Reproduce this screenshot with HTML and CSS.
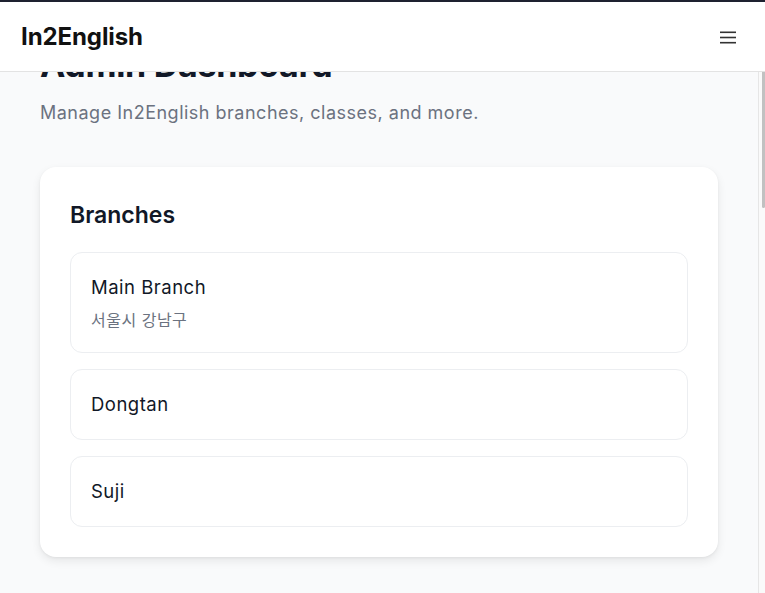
FILE: index.html
```html
<!DOCTYPE html>
<html lang="ko">
<head>
<meta charset="utf-8">
<title>In2English Admin</title>
<link rel="stylesheet" href="styles.css">
</head>
<body>
<div class="topline"></div>
<header class="header">
  <div class="brand">In2English</div>
  <button class="menu" aria-label="Menu">
    <svg width="16" height="13" viewBox="0 0 16 13"><rect x="0" y="0.5" width="16" height="1.6" fill="#333"/><rect x="0" y="5.7" width="16" height="1.6" fill="#333"/><rect x="0" y="10.9" width="16" height="1.6" fill="#333"/></svg>
  </button>
</header>
<div class="viewport">
  <main class="main">
    <h1 class="title">Admin Dashboard</h1>
    <p class="subtitle">Manage In2English branches, classes, and more.</p>
    <section class="card">
      <h2 class="card-title">Branches</h2>
      <ul class="list">
        <li class="item">
          <div class="item-name">Main Branch</div>
          <div class="item-sub">서울시 강남구</div>
        </li>
        <li class="item">
          <div class="item-name">Dongtan</div>
        </li>
        <li class="item">
          <div class="item-name">Suji</div>
        </li>
      </ul>
    </section>
  </main>
  <div class="scrollbar"><div class="thumb"></div></div>
</div>
</body>
</html>
```
FILE: styles.css
```css
* { box-sizing: border-box; }
html, body { height: 100%; }
body {
  margin: 0;
  font-family: Inter, "Noto Sans CJK KR", sans-serif;
  color: #111827;
  background: #f9fafb;
  display: flex;
  flex-direction: column;
  overflow: hidden;
}
.topline { height: 2px; background: #1e2130; flex: none; }
.header {
  flex: none;
  height: 70px;
  background: #fff;
  border-bottom: 1px solid #e3e3e3;
  display: flex;
  align-items: center;
  justify-content: space-between;
  padding: 0 29px 0 21px;
}
.brand { font-size: 24px; font-weight: 700; letter-spacing: -0.1px; color: #111; }
.menu { border: 0; background: none; padding: 0; display: flex; margin-top: 1px; }
.viewport { flex: 1; display: flex; min-height: 0; }
.main {
  flex: 1;
  overflow: hidden;
  padding: 0 40px;
  background: #f9fafb;
}
.title {
  margin: -27px 0 0;
  font-size: 34px;
  line-height: 40px;
  font-weight: 700;
  letter-spacing: -0.3px;
}
.subtitle {
  margin: 14px 0 0;
  font-size: 18px;
  line-height: 28px;
  letter-spacing: 0.5px;
  color: #6b7280;
}
.card {
  margin-top: 40px;
  background: #fff;
  border-radius: 16px;
  padding: 30px;
  box-shadow: 0 4px 10px rgba(0,0,0,0.08), 0 1px 3px rgba(0,0,0,0.05);
}
.card-title {
  margin: 0 0 19px;
  font-size: 23px;
  line-height: 36px;
  font-weight: 600;
  letter-spacing: 0;
}
.list { list-style: none; margin: 0; padding: 0; display: flex; flex-direction: column; gap: 16px; }
.item {
  border: 1px solid #eceef1;
  border-radius: 12px;
  padding: 20px;
}
.item-name { font-size: 18.5px; line-height: 29px; font-weight: 400; letter-spacing: 0.5px; color: #111827; }
.item-sub { margin-top: 6px; font-size: 16px; line-height: 24px; letter-spacing: 0.5px; color: #6b7280; }
.scrollbar {
  flex: none;
  width: 7px;
  border-left: 1px solid #e6e6e6;
  background: #fafafa;
  padding-left: 3px;
}
.thumb {
  width: 3px;
  height: 136px;
  background: #c1c1c1;
  border-radius: 0 0 2px 2px;
}
```
